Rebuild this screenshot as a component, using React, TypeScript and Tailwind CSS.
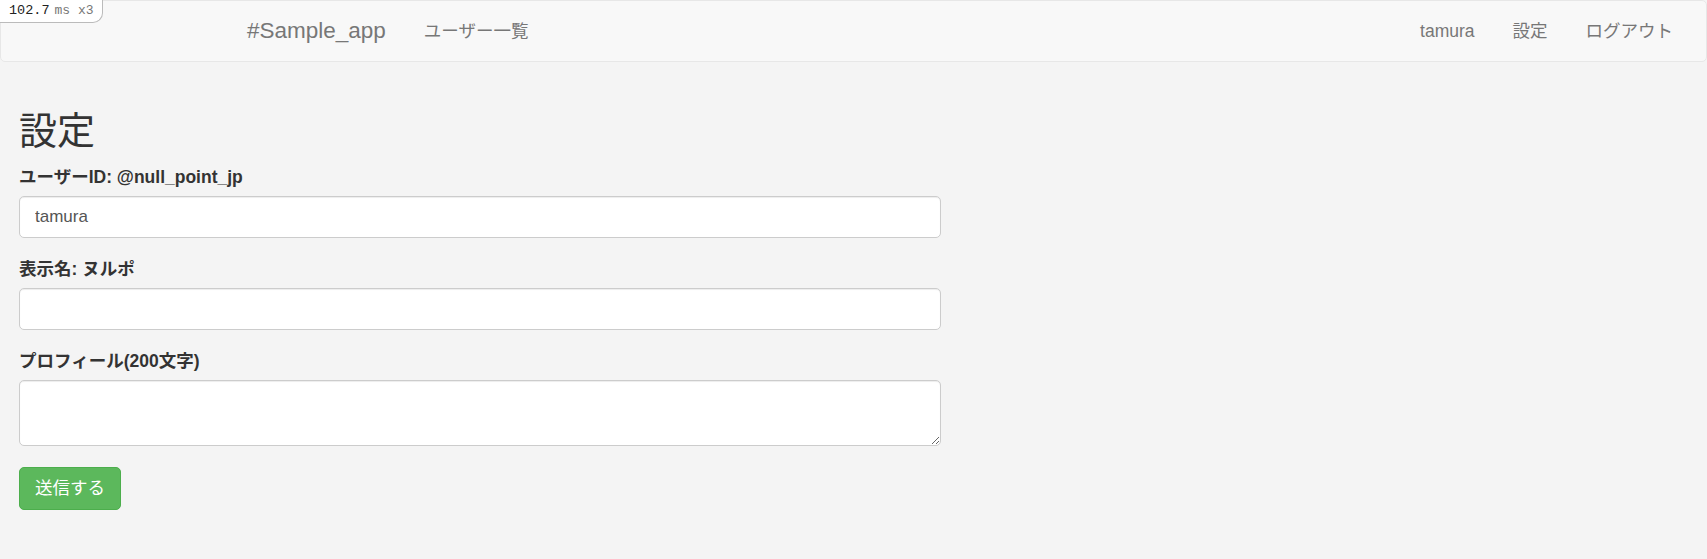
import React from "react";

const sans = "font-['Liberation_Sans','Noto_Sans_CJK_JP',sans-serif]";

const Field = ({ label, value, area }: { label: string; value?: string; area?: boolean }) => (
  <div className="flex flex-col">
    <label className="text-[17.5px] leading-[24px] font-bold text-[#333] mb-[7px]">{label}</label>
    {area ? (
      <textarea
        rows={2}
        className="h-[66px] w-[922px] rounded-[5px] border border-[#ccc] bg-white px-[14px] py-[7px] text-[17px] text-[#555] shadow-[inset_0_1px_1px_rgba(0,0,0,0.075)] outline-none"
      />
    ) : (
      <input
        defaultValue={value}
        className="h-[42px] w-[922px] rounded-[5px] border border-[#ccc] bg-white px-[15px] text-[17px] text-[#555] shadow-[inset_0_1px_1px_rgba(0,0,0,0.075)] outline-none"
      />
    )}
  </div>
);

export default function App() {
  return (
    <div className={`relative min-h-[559px] bg-[#f4f4f4] ${sans}`}>
      {/* profiler badge */}
      <div className="absolute left-0 top-0 z-10 flex h-[23px] items-center gap-[5px] rounded-br-[10px] border-b border-r border-[#bbb] bg-white pl-[9px] pr-[8px] font-['Liberation_Mono',monospace]">
        <span className="text-[13.5px] text-[#222]">102.7</span>
        <span className="text-[13px] text-[#777]">ms x3</span>
      </div>

      <nav className="flex h-[62px] items-center rounded-[5px] border border-[#e7e7e7] bg-[#f8f8f8] text-[#777]">
        <div className="flex flex-1 items-center pl-[246px]">
          <span className="text-[22.5px]">#Sample_app</span>
          <span className="ml-[38px] text-[17.5px]">ユーザー一覧</span>
        </div>
        <div className="flex items-center gap-[38px] pr-[33px] text-[17.5px]">
          <span>tamura</span>
          <span>設定</span>
          <span>ログアウト</span>
        </div>
      </nav>

      <main className="px-[19px] pt-[46px]">
        <h1 className="text-[38px] leading-[47px] text-[#333] mb-[10px]">設定</h1>
        <div className="flex flex-col gap-[19px]">
          <Field label="ユーザーID: @null_point_jp" value="tamura" />
          <Field label="表示名: ヌルポ" />
          <Field label="プロフィール(200文字)" area />
        </div>
        <button className="mt-[21px] h-[43px] rounded-[5px] border border-[#4cae4c] bg-[#5cb85c] px-[15px] text-[17.5px] text-white">
          送信する
        </button>
      </main>
    </div>
  );
}
